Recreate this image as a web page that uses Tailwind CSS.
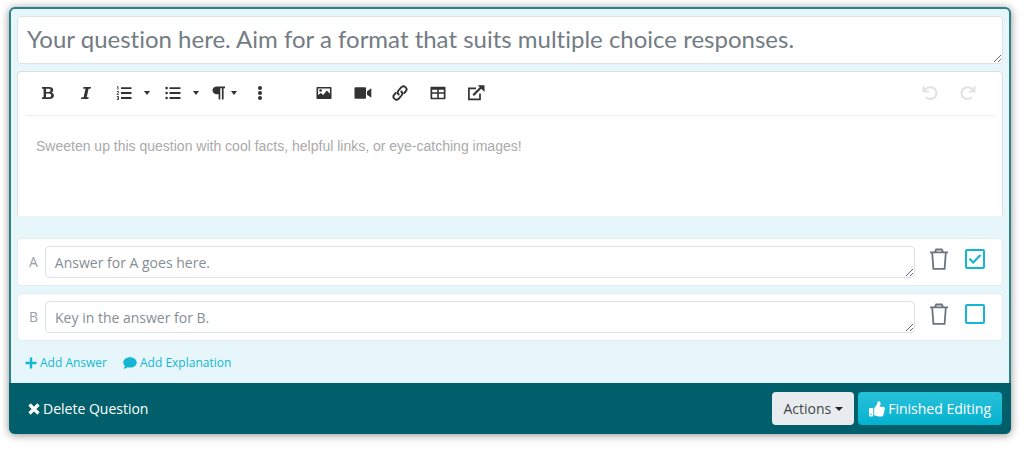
<!DOCTYPE html>
<html lang="en">
<head>
<meta charset="utf-8">
<meta name="viewport" content="width=device-width, initial-scale=1">
<title>Question editor</title>
<script src="https://cdn.jsdelivr.net/npm/@tailwindcss/browser@4"></script>
</head>
<body class="bg-white font-['Open_Sans',sans-serif] text-sm">
<main class="pt-[7px] pr-[13px] pb-4 pl-[9px]">
  <form class="rounded-md border-2 border-[#2f7f88] bg-[#e6f6fa] shadow-[0_1px_8px_rgba(0,0,0,0.45)]">
    <div class="px-1.5 pt-[7px]">
      <textarea aria-label="Question" placeholder="Your question here. Aim for a format that suits multiple choice responses." class="block h-12 w-full resize overflow-hidden rounded border border-[#dce3e6] bg-white px-[9px] pt-1.5 font-[Lato,sans-serif] text-2xl leading-8 text-[#6c757d] [font-variant-ligatures:none] placeholder:text-[#737c84]"></textarea>

      <section aria-label="Question details" class="mt-[7px] h-[145px] rounded-t border border-b-0 border-[#dcdfe1] bg-white px-2">
        <div role="toolbar" aria-label="Formatting" class="flex h-11 items-center border-b border-[#ececec] pb-0.5 text-[#333]">
          <button type="button" aria-label="Bold" class="ml-3.5"><svg class="size-4" viewBox="0 0 16 16" fill="currentColor"><path fill-rule="evenodd" d="M2 2h7.200c2.600 0 4 1.100 4 3 0 1.300-.7 2.200-1.900 2.600 1.600.4 2.600 1.400 2.600 3 0 2.200-1.700 3.400-4.400 3.400H2v-1.700h1.600V3.700H2zm4 1.700v3.200h2.600c1.300 0 2-.6 2-1.600s-.7-1.600-2-1.600zm0 4.900v3.700h3c1.400 0 2.200-.6 2.200-1.800s-.8-1.900-2.200-1.900z"/></svg></button>
          <button type="button" aria-label="Italic" class="ml-[22px]"><svg class="size-4" viewBox="0 0 16 16" fill="currentColor"><path d="M5.500 2H13l-.4 1.700h-2L8.700 12.300h2l-.4 1.700H3l.4-1.700h2.200L7.500 3.700H5.200z"/></svg></button>
          <button type="button" aria-label="Ordered list" class="ml-[22px]"><svg class="size-4" viewBox="0 0 16 16" fill="currentColor"><path d="M5 2.200h10.500v1.900H5zM5 7.100h10.500V9H5zM5 12h10.500v1.900H5z"/><path fill="none" stroke="currentColor" stroke-width=".9" d="M1 2l1-.5v3.200M.8 6.500h1.700v1.200L.9 9.400h1.800M.8 11.500h1.700v3H.8M1.200 13h1.300"/></svg></button>
          <button type="button" aria-label="Ordered list styles" class="ml-3"><svg class="h-1 w-1.5" viewBox="0 0 7 4" preserveAspectRatio="none" fill="currentColor"><path d="M0 0h7L3.500 4z"/></svg></button>
          <button type="button" aria-label="Unordered list" class="ml-[15px]"><svg class="size-4" viewBox="0 0 16 16" fill="currentColor"><path d="M4.500 2.200h11v1.900h-11zM4.500 7.100h11V9h-11zM4.500 12h11v1.900h-11z"/><circle cx="1.600" cy="3.100" r="1.300"/><circle cx="1.600" cy="8" r="1.300"/><circle cx="1.600" cy="13" r="1.300"/></svg></button>
          <button type="button" aria-label="Unordered list styles" class="ml-3"><svg class="h-1 w-1.5" viewBox="0 0 7 4" preserveAspectRatio="none" fill="currentColor"><path d="M0 0h7L3.500 4z"/></svg></button>
          <button type="button" aria-label="Paragraph format" class="ml-3 flex items-center gap-1"><svg class="size-4" viewBox="0 0 16 16" fill="currentColor"><path d="M6 1.500h8v1.800h-1.400v11.200h-1.700V3.300H9.300v11.200H7.600V9.300H6C3.500 9.300 1.500 7.600 1.500 5.400S3.500 1.500 6 1.500z"/></svg><svg class="h-1 w-1.5" viewBox="0 0 7 4" preserveAspectRatio="none" fill="currentColor"><path d="M0 0h7L3.500 4z"/></svg></button>
          <button type="button" aria-label="More text options" class="ml-[15px]"><svg class="size-4" viewBox="0 0 16 16" fill="currentColor"><circle cx="8" cy="2.900" r="2"/><circle cx="8" cy="8" r="2"/><circle cx="8" cy="13.100" r="2"/></svg></button>
          <button type="button" aria-label="Insert image" class="ml-12"><svg class="size-4" viewBox="0 0 16 16" fill="currentColor"><path fill-rule="evenodd" d="M1.500 2h13c.6 0 1 .4 1 1v10c0 .6-.4 1-1 1h-13c-.6 0-1-.4-1-1V3c0-.6.4-1 1-1zm.6 1.600v6.500l2.800-2 2.300 1.800 3.600-4.300 3.100 3.200V3.600z"/><circle cx="4.600" cy="5.500" r="1.300"/></svg></button>
          <button type="button" aria-label="Insert video" class="ml-[22px]"><svg class="h-4 w-[18px]" viewBox="0 0 18 16" fill="currentColor"><rect x=".5" y="2.300" width="11.500" height="11.400" rx="1"/><path d="M17.300 3.300v9.400l-4.300-2.900V6.200z"/></svg></button>
          <button type="button" aria-label="Insert link" class="ml-5"><svg class="size-4" viewBox="0 0 16 16" fill="none" stroke="currentColor" stroke-width="1.900" stroke-linecap="round"><path d="M6.700 9.500a3 3 0 0 1-.2-4l2.700-3.100a3 3 0 0 1 4.500 4L12.300 8M9.300 6.500a3 3 0 0 1 .2 4l-2.700 3.100a3 3 0 0 1-4.500-4L3.700 8"/></svg></button>
          <button type="button" aria-label="Insert table" class="ml-[22px]"><svg class="size-4" viewBox="0 0 16 16" fill="currentColor"><path fill-rule="evenodd" d="M1.500 1.700h13c.6 0 1 .4 1 1v10.600c0 .6-.4 1-1 1h-13c-.6 0-1-.4-1-1V2.700c0-.6.4-1 1-1zM2.200 4.700v2.500h5V4.700zm6.600 0v2.500h5V4.700zM2.200 8.800v3.900h5V8.800zm6.600 0v3.900h5V8.800z"/></svg></button>
          <button type="button" aria-label="Embed external content" class="ml-[21px]"><svg class="h-4 w-[18px]" viewBox="0 0 18 16" fill="none" stroke="currentColor"><path stroke-width="1.700" d="M9 3.400H1.900v10.900H13V8.500"/><path stroke-width="2.200" d="M6.200 10.300L14.500 2"/><path fill="currentColor" stroke="none" d="M10.800.3h6.700V7z"/></svg></button>
          <span class="ml-auto flex gap-[22px] pr-[18px] text-[#e2e2e2]">
            <button type="button" disabled aria-label="Undo"><svg class="size-4" viewBox="0 0 16 16" fill="none" stroke="currentColor" stroke-width="2"><path d="M1.500 1v5.500H7M2.300 5.800C4 3 6.500 2 9 2.200c3 .2 5.500 2.700 5.500 5.800 0 3.300-2.700 6-6 6-1.700 0-3.200-.7-4.300-1.800"/></svg></button>
            <button type="button" disabled aria-label="Redo"><svg class="size-4" viewBox="0 0 16 16" fill="none" stroke="currentColor" stroke-width="2"><path d="M14.500 1v5.500H9M13.700 5.800C12 3 9.500 2 7 2.200c-3 .2-5.500 2.700-5.500 5.800 0 3.300 2.700 6 6 6 1.700 0 3.200-.7 4.300-1.800"/></svg></button>
          </span>
        </div>
        <textarea aria-label="Details" placeholder="Sweeten up this question with cool facts, helpful links, or eye-catching images!" class="block h-[95px] w-full resize-none px-[10px] pt-5 font-['Liberation_Sans',sans-serif] text-sm leading-5 placeholder:text-[#aaa]"></textarea>
      </section>

      <div class="mt-[22px] flex flex-col gap-[7px] text-[#6c757d]">
        <div class="flex h-12 items-center rounded border border-[#e3ecef] bg-white pr-[17px] pl-[11px]">
          <label for="answer-a" class="text-[#9a9fa4]">A</label>
          <textarea id="answer-a" placeholder="Answer for A goes here." class="ml-[7px] h-8 min-w-0 flex-1 resize overflow-hidden rounded border border-[#dde2e6] px-[9px] pt-1.5 text-sm leading-5 placeholder:text-[#868d94]"></textarea>
          <button type="button" aria-label="Delete answer A" class="ml-3.5 mt-[9px] self-start"><svg class="h-[22px] w-5" viewBox="0 0 20 22" fill="none" stroke="currentColor" stroke-width="1.800"><path d="M1 4.300h18M6 4l1.200-2.500h5.600L14 4M3.200 4.500l1.200 16.300h11.200l1.200-16.300"/></svg></button>
          <span class="mt-2.5 ml-4 grid size-5 place-items-center self-start text-[#13b6d3]">
            <input type="checkbox" checked aria-label="A is correct" class="peer col-start-1 row-start-1 size-5 appearance-none rounded-xs border-2 border-current">
            <svg class="pointer-events-none invisible col-start-1 row-start-1 size-5 peer-checked:visible" viewBox="0 0 20 20" fill="none" stroke="currentColor" stroke-width="2.200"><path d="M4.500 9.800l3.700 3.700 7.300-7.500"/></svg>
          </span>
        </div>
        <div class="flex h-12 items-center rounded border border-[#e3ecef] bg-white pr-[17px] pl-[11px]">
          <label for="answer-b" class="text-[#9a9fa4]">B</label>
          <textarea id="answer-b" placeholder="Key in the answer for B." class="ml-[7px] h-8 min-w-0 flex-1 resize overflow-hidden rounded border border-[#dde2e6] px-[9px] pt-1.5 text-sm leading-5 placeholder:text-[#868d94]"></textarea>
          <button type="button" aria-label="Delete answer B" class="ml-3.5 mt-[9px] self-start"><svg class="h-[22px] w-5" viewBox="0 0 20 22" fill="none" stroke="currentColor" stroke-width="1.800"><path d="M1 4.300h18M6 4l1.200-2.500h5.600L14 4M3.200 4.500l1.200 16.300h11.200l1.200-16.300"/></svg></button>
          <span class="mt-2.5 ml-4 grid size-5 place-items-center self-start text-[#13b6d3]">
            <input type="checkbox" aria-label="B is correct" class="peer col-start-1 row-start-1 size-5 appearance-none rounded-xs border-2 border-current">
            <svg class="pointer-events-none invisible col-start-1 row-start-1 size-5 peer-checked:visible" viewBox="0 0 20 20" fill="none" stroke="currentColor" stroke-width="2.200"><path d="M4.500 9.800l3.700 3.700 7.300-7.500"/></svg>
          </span>
        </div>
      </div>

      <div class="flex h-[42px] items-center gap-4 pt-0.5 pl-2 text-xs text-[#13b6d3]">
        <button type="button" class="flex items-center gap-[3px]"><svg class="size-3" viewBox="0 0 12 12" stroke="currentColor" stroke-width="2.400"><path d="M6 .5v11M.5 6h11"/></svg>Add Answer</button>
        <button type="button" class="flex items-center gap-[3px]"><svg class="size-3.5" viewBox="0 0 14 14" fill="currentColor"><path d="M7 1.200c3.700 0 6.700 2.300 6.700 5.200S10.700 11.600 7 11.600c-.9 0-1.700-.1-2.500-.4-.9.7-2.300 1.400-4 1.400.8-.8 1.300-1.700 1.400-2.600C.9 9 .3 7.800.3 6.400.3 3.500 3.300 1.200 7 1.200z"/></svg>Add Explanation</button>
      </div>
    </div>

    <footer class="-mx-0.5 -mb-0.5 flex h-[51px] items-center gap-1 rounded-b-md bg-[#005f6b] pr-[9px] pl-[19px] text-white">
      <button type="button" class="mr-auto flex items-center gap-[3px]"><svg class="size-3" viewBox="0 0 12 12" stroke="currentColor" stroke-width="3.200"><path d="M1.500 1.500l9 9M10.500 1.500l-9 9"/></svg>Delete Question</button>
      <button type="button" class="flex h-[33px] items-center gap-1 rounded bg-[#e9ecef] px-[11px] text-[#3f454b]">Actions<svg class="h-1 w-2" viewBox="0 0 8 4" fill="#212529"><path d="M0 0h8L4 4z"/></svg></button>
      <button type="button" class="flex h-[33px] items-center gap-[3px] rounded bg-linear-to-b from-[#26c0da] to-[#00b2cf] px-[11px]"><svg class="size-4" viewBox="0 0 16 16" fill="currentColor"><path fill-rule="evenodd" d="M.8 7h2.700c.4 0 .8.300.8.800v7c0 .4-.4.700-.8.700H.8c-.4 0-.8-.3-.8-.7v-7C0 7.300.4 7 .8 7zm1.300 5.800a.7.700 0 1 0 0 1.400.7.700 0 0 0 0-1.400z"/><path d="M5.200 7.700c0-.5.100-.7.500-1.100 1.200-1.200 2.200-2.500 2.500-4C8.400 1.500 8.600.3 9.600.3c1.300 0 2 1 2 2.500 0 1.200-.5 1.900-.9 3h3.500c1 0 1.700.8 1.700 1.700 0 .6-.3 1.100-.6 1.400.4.700.3 1.600-.3 2.200.2.700 0 1.500-.5 1.900.2 1.600-.7 2.600-2.800 2.600-2.700 0-4-.9-6-1.200-.3 0-.5-.3-.5-.6z"/></svg>Finished Editing</button>
    </footer>
  </form>
</main>
</body>
</html>
